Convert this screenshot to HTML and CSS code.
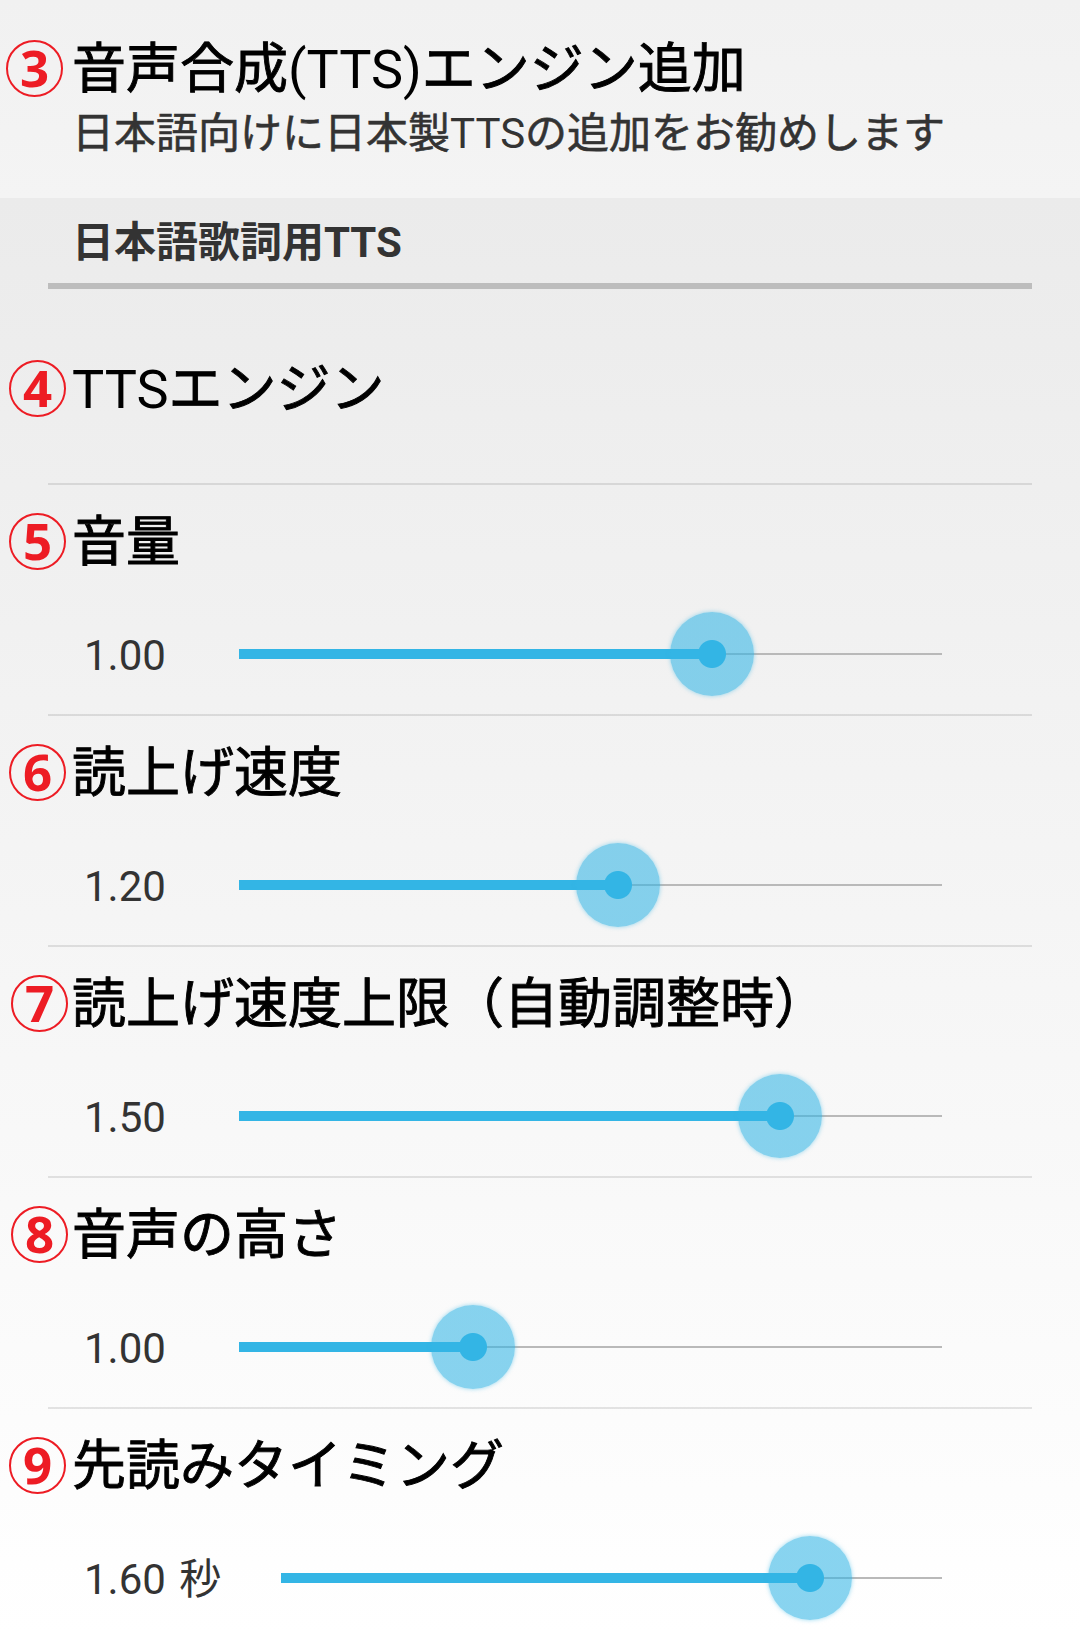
FILE: index.html
```html
<!DOCTYPE html>
<html lang="ja">
<head>
  <meta charset="UTF-8">
  <title>TTS設定</title>
  <link rel="stylesheet" href="styles.css">
</head>
<body>
  <section class="engine-add">
    <div class="heading">
      <span class="badge badge-left">3</span>
      <h2>音声合成<span class="latin">(TTS)</span>エンジン追加</h2>
    </div>
    <p class="summary">日本語向けに日本製<span class="latin">TTS</span>の追加をお勧めします</p>
  </section>

  <section class="settings">
    <h3 class="category">日本語歌詞用TTS</h3>

    <div class="row row-engine">
      <div class="heading">
        <span class="badge">4</span>
        <h2><span class="latin">TTS</span>エンジン</h2>
      </div>
    </div>

    <div class="row">
      <div class="heading">
        <span class="badge">5</span>
        <h2>音量</h2>
      </div>
      <div class="seek">
        <span class="value">1.00</span>
        <div class="track">
          <div class="fill" style="width: 67.3%"><span class="thumb"></span></div>
        </div>
      </div>
    </div>

    <div class="row">
      <div class="heading">
        <span class="badge">6</span>
        <h2>読上げ速度</h2>
      </div>
      <div class="seek">
        <span class="value">1.20</span>
        <div class="track">
          <div class="fill" style="width: 53.9%"><span class="thumb"></span></div>
        </div>
      </div>
    </div>

    <div class="row">
      <div class="heading">
        <span class="badge badge-right">7</span>
        <h2>読上げ速度上限（自動調整時）</h2>
      </div>
      <div class="seek">
        <span class="value">1.50</span>
        <div class="track">
          <div class="fill" style="width: 77%"><span class="thumb"></span></div>
        </div>
      </div>
    </div>

    <div class="row">
      <div class="heading">
        <span class="badge badge-right">8</span>
        <h2>音声の高さ</h2>
      </div>
      <div class="seek">
        <span class="value">1.00</span>
        <div class="track">
          <div class="fill" style="width: 33.3%"><span class="thumb"></span></div>
        </div>
      </div>
    </div>

    <div class="row">
      <div class="heading">
        <span class="badge">9</span>
        <h2>先読みタイミング</h2>
      </div>
      <div class="seek seek-unit">
        <span class="value">1.60 秒</span>
        <div class="track">
          <div class="fill" style="width: 80%"><span class="thumb"></span></div>
        </div>
      </div>
    </div>
  </section>
</body>
</html>
```
FILE: styles.css
```css
* {
  box-sizing: border-box;
}
body {
  margin: 0;
  height: 1634px;
  overflow: hidden;
  background: #fff;
  color: #000;
  font-family: Roboto, "Noto Sans CJK JP", sans-serif;
}
h2, h3, p {
  margin: 0;
}
h2 {
  font-size: 54px;
  font-weight: 400;
  line-height: 64px;
  white-space: nowrap;
  -webkit-text-stroke: 0.9px;
}
.latin {
  -webkit-text-stroke: 0;
}
.engine-add {
  height: 198px;
  padding-top: 38px;
  background: linear-gradient(#f1f1f1, #f4f4f4);
}
.heading {
  display: grid;
  grid-template-columns: 72px 1fr;
  align-items: start;
}
.badge {
  width: 57px;
  height: 57px;
  margin: 2px 0 0 9px;
  border: 2px solid #ed1c24;
  border-radius: 50%;
  color: #ed1c24;
  font: bold 51px/50px "Noto Sans", sans-serif;
  text-align: center;
}
.badge-left {
  margin-left: 6px;
}
.badge-right {
  margin-left: 11px;
}
.summary {
  padding: 7px 0 0 72px;
  color: #333;
  font-size: 42px;
  line-height: 50px;
  -webkit-text-stroke: 0.6px;
}
.settings {
  height: 1436px;
  overflow: hidden;
  background: linear-gradient(#ebebeb, #fff);
}
.category {
  height: 91px;
  margin: 0 48px;
  padding: 20px 0 0 24px;
  border-bottom: 6px solid #bdbdbd;
  color: #333;
  font-size: 42px;
  line-height: 50px;
}
.row {
  height: 231px;
  padding-top: 26px;
  /* divider is inset, headings are not */
  background: linear-gradient(rgba(0, 0, 0, 0.1), rgba(0, 0, 0, 0.1)) center bottom / 984px 2px no-repeat;
}
.row-engine {
  height: 196px;
  padding-top: 69px;
}
.seek {
  display: grid;
  grid-template-columns: 155px 703px;
  align-items: center;
  height: 84px;
  margin: 37px 0 0 84px;
}
.seek-unit {
  grid-template-columns: 197px 661px;
}
.value {
  padding-top: 3px;
  color: #333;
  font-size: 42px;
  line-height: 80px;
  white-space: nowrap;
  word-spacing: 3px;
}
.track {
  height: 10px;
  background: linear-gradient(#b9b9b9, #b9b9b9) center / 100% 2px no-repeat;
}
.fill {
  position: relative;
  height: 10px;
  background: #33b5e5;
}
.thumb {
  position: absolute;
  top: -37px;
  right: -42px;
  width: 84px;
  height: 84px;
  border-radius: 50%;
  background: radial-gradient(circle, #33b5e5 13.5px, rgba(51, 181, 229, 0.58) 14.5px);
  box-shadow: 0 0 4px rgba(51, 181, 229, 0.5);
}
```
